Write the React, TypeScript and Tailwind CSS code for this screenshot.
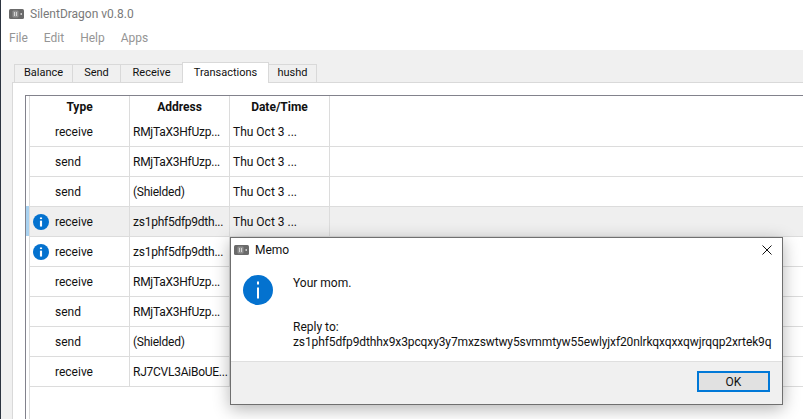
const rows = [
  { type: "receive", address: "RMjTaX3HfUzp...", date: "Thu Oct 3 ..." },
  { type: "send", address: "RMjTaX3HfUzp...", date: "Thu Oct 3 ..." },
  { type: "send", address: "(Shielded)", date: "Thu Oct 3 ..." },
  { type: "receive", address: "zs1phf5dfp9dth...", date: "Thu Oct 3 ...", memo: true, selected: true },
  { type: "receive", address: "zs1phf5dfp9dth...", date: "Thu Oct 3 ...", memo: true },
  { type: "receive", address: "RMjTaX3HfUzp...", date: "Thu Oct 3 ..." },
  { type: "send", address: "RMjTaX3HfUzp...", date: "Thu Oct 3 ..." },
  { type: "send", address: "(Shielded)", date: "Thu Oct 3 ..." },
  { type: "receive", address: "RJ7CVL3AiBoUE...", date: "Thu Oct 3 ..." },
];

const tabs = [
  { label: "Balance", width: "w-[59px]" },
  { label: "Send", width: "w-[49px]" },
  { label: "Receive", width: "w-[63px]" },
  { label: "Transactions", width: "w-[87px]", active: true },
  { label: "hushd", width: "w-[49px]" },
];

const AppIcon = () => (
  <svg className="shrink-0" width="15" height="10" viewBox="0 0 15 10">
    <rect width="15" height="10" rx="1.5" fill="#6a6a6a" />
    <rect x="3.5" y="1.5" width="6" height="7" rx="1" fill="#8f8f8f" />
    <path d="M5.5 3v4M7.5 3v4" stroke="#d4d4d4" strokeWidth="1" />
    <rect x="11.5" y="4" width="1.5" height="2" fill="#c8c8c8" />
  </svg>
);

// the small table icon has a heavier stem than the dialog one
const InfoIcon = ({ size, stem }: { size: number; stem: number }) => (
  <svg className="shrink-0" width={size} height={size} viewBox="0 0 30 30">
    <circle cx="15" cy="15" r="15" fill="#0472cf" />
    <rect x={15 - stem / 2} y="12.5" width={stem} height="11" fill="#fff" />
    <rect x={15 - stem / 2} y="6.5" width={stem} height="3" fill="#fff" />
  </svg>
);

const App = () => {
  return (
    <div className="relative w-[803px] h-[419px] overflow-hidden bg-white font-['Roboto',sans-serif] text-[12px] text-[#111] border-l border-[#2c3440]">
      {/* title bar */}
      <div className="h-[28px] flex items-center gap-[6px] pl-[8px] text-[#7a7a7a]">
        <AppIcon />
        <span className="text-[12px]">SilentDragon v0.8.0</span>
      </div>
      <div className="h-[22px] pb-[2px] flex items-center gap-[16px] pl-[8px] text-[#959595]">
        <span>File</span>
        <span>Edit</span>
        <span>Help</span>
        <span>Apps</span>
      </div>

      <div className="h-[369px] bg-[#f0f0f0] pt-[12px] pl-[11px]">
        {/* tabs */}
        <div className="h-[20px] flex items-end pl-[2px] text-[11px]">
          {tabs.map((t) =>
            t.active ? (
              <div key={t.label} className={`${t.width} h-[21px] -mb-px -mr-px z-10 flex items-center justify-center bg-white border border-b-0 border-[#d9d9d9] text-[#111]`}>
                {t.label}
              </div>
            ) : (
              <div key={t.label} className={`${t.width} h-[18px] flex items-center justify-center bg-[#f0f0f0] border border-b-0 border-[#d9d9d9] -mr-px`}>
                {t.label}
              </div>
            )
          )}
        </div>

        {/* tab pane */}
        <div className="h-[337px] bg-white border-t border-l border-[#d9d9d9] pt-[12px] pl-[12px]">
          <div className="h-[324px] border-t border-l border-[#82828c] flex">
            <div className="w-[3px] shrink-0 flex flex-col">
              <div className="h-[110px]" />
              <div className="h-[30px] bg-[#a9d2f0]" />
            </div>
            <div className="flex-1 border-l border-[#dcdcdc]">
              <div className="h-[21px] flex font-bold">
                <div className="w-[100px] flex items-center justify-center border-r border-[#dcdcdc]">Type</div>
                <div className="w-[100px] flex items-center justify-center border-r border-[#dcdcdc]">Address</div>
                <div className="w-[100px] flex items-center justify-center border-r border-[#dcdcdc]">Date/Time</div>
              </div>
              {rows.map((r, i) => (
                <div key={i} className={`h-[30px] flex border-b border-[#dcdcdc] ${r.selected ? "bg-[#efefef]" : ""}`}>
                  <div className="w-[100px] flex items-center border-r border-[#dcdcdc] pl-[3px] gap-[6px]">
                    <div className="w-[16px] flex">{r.memo && <InfoIcon size={16} stem={4} />}</div>
                    <span>{r.type}</span>
                  </div>
                  <div className="w-[100px] flex items-center border-r border-[#dcdcdc] pl-[3px] whitespace-nowrap tracking-[-0.25px]">{r.address}</div>
                  <div className="w-[100px] flex items-center border-r border-[#dcdcdc] pl-[3px] whitespace-nowrap">{r.date}</div>
                  <div className="flex-1" />
                </div>
              ))}
            </div>
          </div>
        </div>
      </div>

      {/* memo dialog */}
      <div className="absolute left-[229px] top-[237px] w-[553px] h-[168px] bg-white border border-[#6f6f6f] shadow-[0_4px_16px_rgba(0,0,0,0.3)] flex flex-col">
        <div className="h-[24px] flex items-center pl-[3px] gap-[6px]">
          <AppIcon />
          <span>Memo</span>
          <svg className="ml-auto mr-[10px]" width="10" height="10" viewBox="0 0 10 10">
            <path d="M0.5 0.5l9 9M9.5 0.5l-9 9" stroke="#111" strokeWidth="1" fill="none" />
          </svg>
        </div>
        <div className="h-[99px] flex pl-[12px] pt-[13px]">
          <InfoIcon size={30} stem={2} />
          <div className="ml-[20px] flex flex-col">
            <span className="h-[17px] leading-[17px]">Your mom.</span>
            <span className="mt-[28px] h-[15px] leading-[15px]">Reply to:</span>
            <span className="h-[15px] leading-[15px] whitespace-nowrap tracking-[-0.11px]">zs1phf5dfp9dthhx9x3pcqxy3y7mxzswtwy5svmmtyw55ewlyjxf20nlrkqxqxxqwjrqqp2xrtek9q</span>
          </div>
        </div>
        <div className="flex-1 bg-[#f0f0f0] border-t border-[#dfdfdf] flex justify-end items-start pt-[9px] pr-[12px]">
          <div className="w-[73px] h-[21px] bg-[#e1e1e1] border-2 border-[#0078d7] flex items-center justify-center">OK</div>
        </div>
      </div>
    </div>
  );
};

export default App;
